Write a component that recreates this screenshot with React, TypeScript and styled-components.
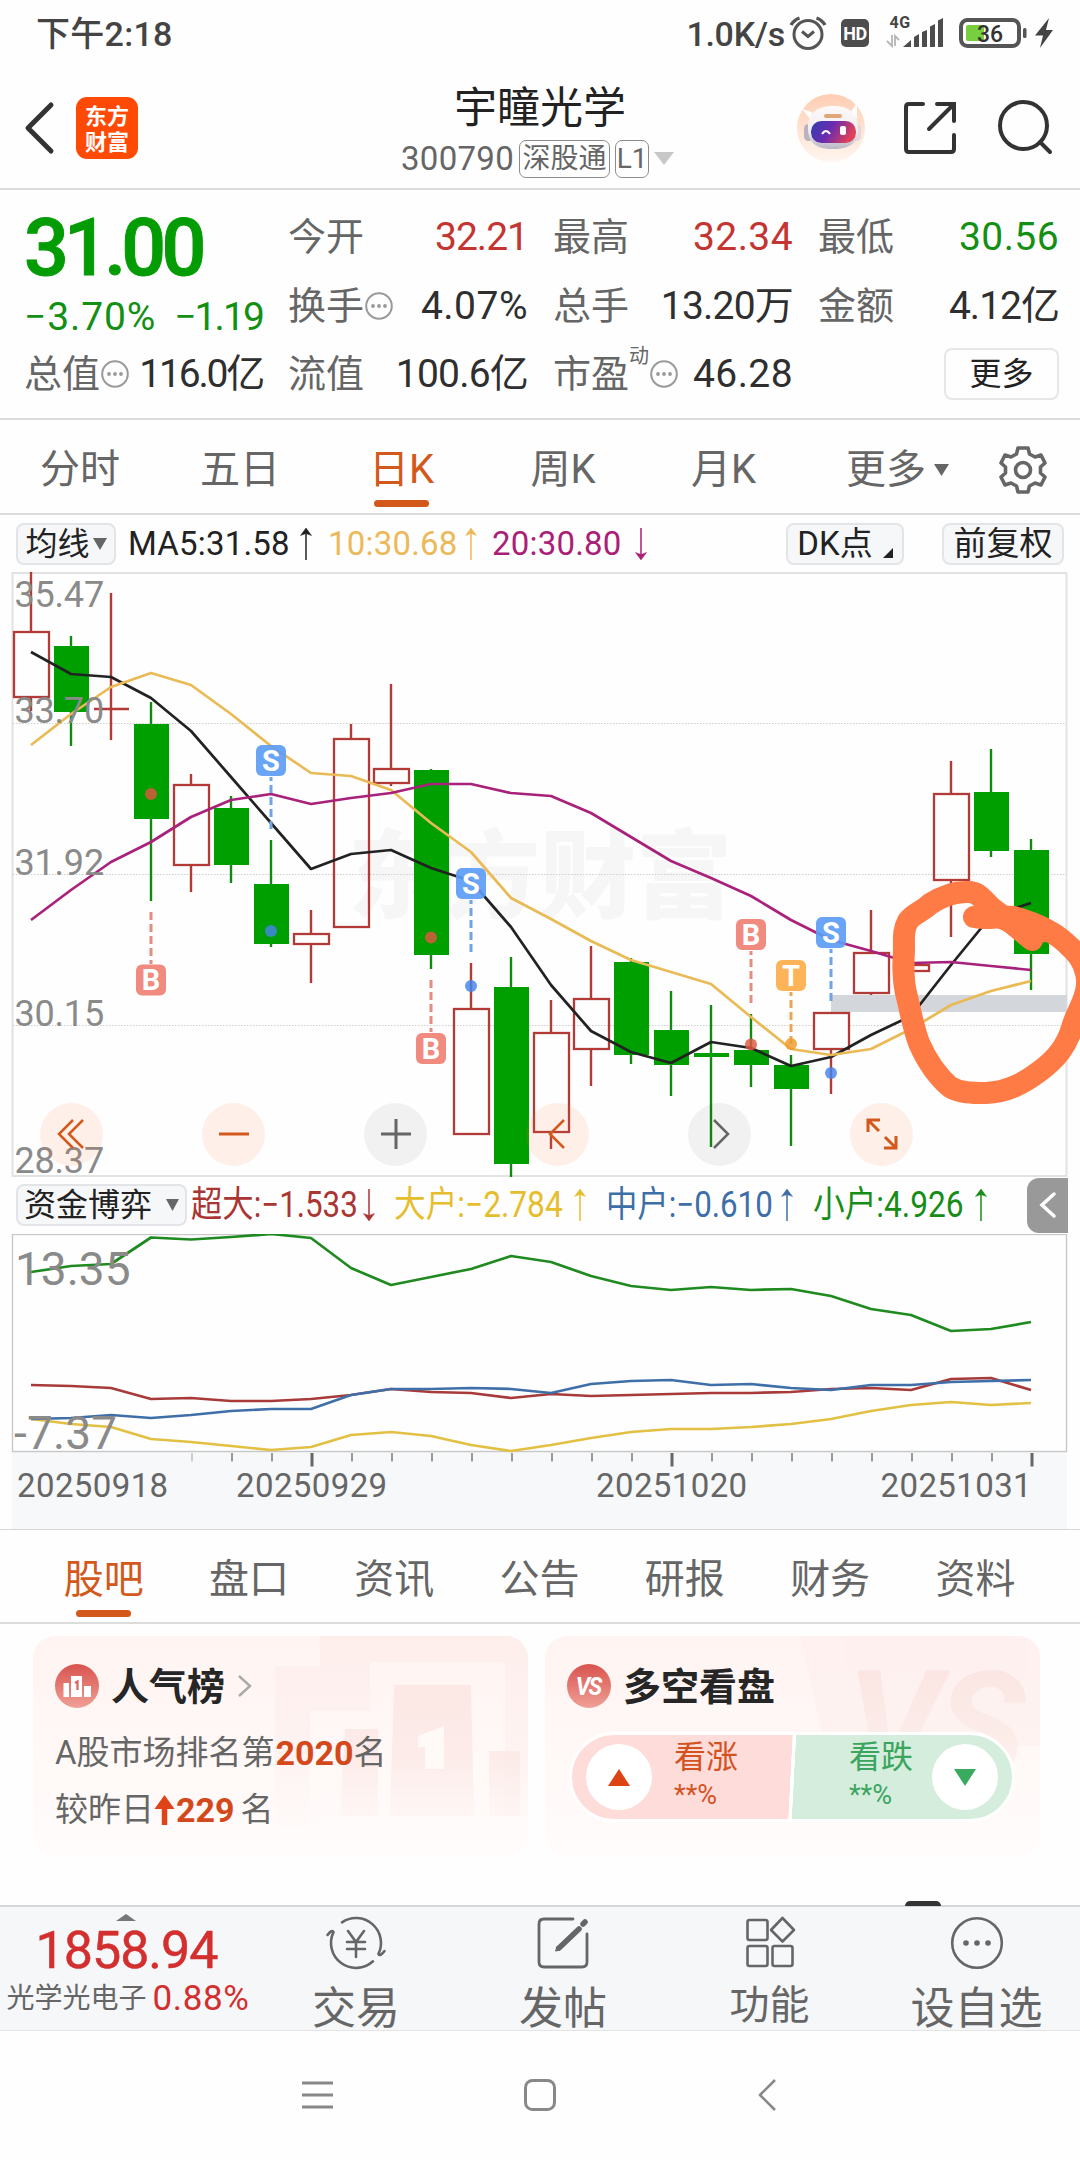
import React from "react";
import styled, { createGlobalStyle, css } from "styled-components";

const C = {
  red: "#c43431",
  green: "#139013",
  orange: "#d2591b",
  ink: "#2f2f2f",
  gray: "#666666",
  line: "#d6d6d6",
  panel: "#f6f7f9",
};

const Global = createGlobalStyle`
  * { box-sizing: border-box; }
  body {
    margin: 0;
    background: #fefefe;
    font-family: Roboto, "Noto Sans CJK SC", sans-serif;
    color: ${C.ink};
  }
  svg { display: block; flex: none; }
`;

const Screen = styled.main`
  width: 1080px;
  height: 2160px;
  overflow: hidden;
  display: flex;
  flex-direction: column;
  background: #fefefe;
  white-space: nowrap;
`;

/* ---------- status bar ---------- */

const StatusBar = styled.div`
  height: 68px;
  padding: 0 23px 0 36px;
  display: flex;
  align-items: center;
  justify-content: space-between;
  font-size: 34px;
  line-height: 48px;
  font-weight: 500;
  color: #444;
`;
const Clock = styled.span`
  letter-spacing: 0.3px;
`;
const StatusRight = styled.div`
  display: flex;
  align-items: center;
  letter-spacing: -0.3px;
`;

/* ---------- header ---------- */

const Header = styled.header`
  height: 122px;
  display: grid;
  grid-template-columns: 400px 280px 400px;
  border-bottom: 2px solid #dcdcdc;
`;
const HeaderLeft = styled.div`
  display: flex;
  align-items: center;
  padding-left: 23px;
  gap: 21px;
`;
const Logo = styled.div`
  width: 62px;
  height: 62px;
  border-radius: 11px;
  background: #ff4a06;
  color: #fff;
  font-family: "Noto Sans CJK SC", sans-serif;
  font-size: 22px;
  font-weight: 700;
  line-height: 26px;
  text-align: center;
  padding-top: 4px;
`;
const HeaderCenter = styled.div`
  display: flex;
  flex-direction: column;
  align-items: center;
`;
const Title = styled.h1`
  margin: 14px 0 0;
  font-size: 43px;
  line-height: 52px;
  font-weight: 400;
  color: #222;
`;
const SubTitle = styled.div`
  display: flex;
  align-items: center;
  gap: 5px;
  height: 40px;
  margin-top: 5px;
  padding-right: 5px;
  font-size: 33px;
  letter-spacing: 0.3px;
  color: ${C.gray};
`;
const Badge = styled.span<{ $w: number }>`
  width: ${(p) => p.$w}px;
  height: 38px;
  border: 1.5px solid #8c8c8c;
  border-radius: 7px;
  font-size: 28px;
  line-height: 36px;
  letter-spacing: 0;
  text-align: center;
`;
const HeaderRight = styled.div`
  display: flex;
  align-items: center;
  justify-content: flex-end;
  padding-right: 26px;
`;

/* ---------- quote panel ---------- */

const Quote = styled.section`
  height: 230px;
  padding: 13px 21px 0 24px;
  display: grid;
  grid-template-columns: 239px 240px 240px 241px;
  grid-template-rows: repeat(3, 68.5px);
  column-gap: 25px;
  border-bottom: 2px solid #dcdcdc;
`;
const PriceBlock = styled.div`
  grid-row: 1 / span 2;
  color: ${C.green};
  display: flex;
  flex-direction: column;
`;
const Price = styled.strong`
  margin-top: 2px;
  font-size: 79px;
  line-height: 86px;
  font-weight: 500;
  color: #049c04;
  letter-spacing: -4.8px;
  -webkit-text-stroke: 1px #049c04;
`;
const Change = styled.div`
  display: flex;
  justify-content: space-between;
  font-size: 39px;
  line-height: 48px;
  margin-top: 2px;
`;
const ChangePart = styled.span<{ $ls: number }>`
  letter-spacing: ${(p) => p.$ls}px;
`;
const Cell = styled.div`
  display: flex;
  align-items: center;
  font-size: 38px;
  line-height: 48px;
`;
const CellLabel = styled.span`
  color: ${C.gray};
  display: flex;
  align-items: center;
`;
const CellValue = styled.span<{ $tone?: string; $ls?: number }>`
  margin-left: auto;
  font-size: 39px;
  color: ${(p) => p.$tone ?? C.ink};
  letter-spacing: ${(p) => p.$ls ?? 0.4}px;
`;
const Sup = styled.sup`
  font-size: 20px;
  line-height: 20px;
  align-self: flex-start;
  margin-top: -4px;
`;
const MoreButton = styled.button`
  margin-left: auto;
  width: 115px;
  height: 52px;
  border: 2px solid #e6e6e9;
  border-radius: 8px;
  background: transparent;
  font: 400 32px/46px Roboto, "Noto Sans CJK SC", sans-serif;
  color: #222;
  padding: 0;
`;

/* ---------- tabs ---------- */

const Tabs = styled.nav<{ $cols: string; $pad: number; $topLine?: boolean }>`
  height: ${(p) => (p.$topLine ? 96 : 95)}px;
  display: grid;
  grid-template-columns: ${(p) => p.$cols};
  padding-left: ${(p) => p.$pad}px;
  border-top: ${(p) => (p.$topLine ? "1px solid #d6d6d6" : "0")};
  border-bottom: 2px solid #dcdcdc;
`;
const Tab = styled.a<{ $active?: boolean }>`
  display: flex;
  flex-direction: column;
  align-items: center;
  padding-top: 20px;
  font-size: 40px;
  line-height: 60px;
  color: ${(p) => (p.$active ? C.orange : C.gray)};
  ${(p) =>
    p.$active &&
    css`
      &::after {
        content: "";
        width: 55px;
        height: 7px;
        border-radius: 4px;
        background: ${C.orange};
      }
    `}
`;
const TabInline = styled.span`
  display: flex;
  align-items: center;
  gap: 8px;
`;
const TabIcon = styled.span`
  padding-top: 2px;
`;

/* ---------- chart toolbars ---------- */

const MaBar = styled.div`
  height: 57px;
  padding: 1px 0 0 16px;
  display: grid;
  grid-template-columns: 112px 200px 164px 294px 156px 122px;
  align-items: center;
`;
const FundBar = styled.div`
  height: 57px;
  padding-left: 16px;
  display: grid;
  grid-template-columns: 175px 203px 212px 207px 214px 41px;
  align-items: center;
`;
const Chip = styled.button<{ $w: number; $gap?: number; $size?: number }>`
  width: ${(p) => p.$w}px;
  height: 42px;
  display: flex;
  align-items: center;
  justify-content: center;
  gap: ${(p) => p.$gap ?? 0}px;
  padding: 0;
  border: 2px solid #e2e4e8;
  border-radius: 8px;
  background: ${C.panel};
  font: 400 ${(p) => p.$size ?? 32}px/36px Roboto, "Noto Sans CJK SC", sans-serif;
  color: #222;
`;
const Corner = styled.i`
  align-self: flex-end;
  margin: 0 0 5px 10px;
  border: 5px solid;
  border-color: transparent #222 #222 transparent;
`;
const Legend = styled.span<{ $tone: string }>`
  display: flex;
  align-items: center;
  font-size: 33px;
  line-height: 48px;
  color: ${(p) => p.$tone};
`;
const LegendText = styled.span<{ $w: number }>`
  width: ${(p) => p.$w}px;
  letter-spacing: 0.2px;
`;
const NarrowText = styled.span<{ $w: number; $k: number }>`
  width: ${(p) => p.$w}px;
  font-size: 36px;
  transform: scaleX(${(p) => p.$k});
  transform-origin: 0 50%;
`;
const Collapse = styled.button`
  width: 41px;
  height: 55px;
  padding: 0;
  border: 0;
  border-radius: 12px 0 0 12px;
  background: #999;
  display: flex;
  align-items: center;
  justify-content: center;
`;

/* ---------- charts ---------- */

const ChartBox = styled.section`
  position: relative;
  height: 605px;
`;
const Controls = styled.div`
  position: absolute;
  left: 40px;
  top: 531px;
  display: flex;
  gap: 99px;
`;
const RoundButton = styled.button<{ $warm?: boolean }>`
  width: 63px;
  height: 63px;
  padding: 0;
  border: 0;
  border-radius: 50%;
  background: ${(p) => (p.$warm ? "rgba(255,120,50,.1)" : "rgba(0,0,0,.05)")};
  color: ${(p) => (p.$warm ? C.orange : C.gray)};
  display: flex;
  align-items: center;
  justify-content: center;
`;

/* ---------- cards ---------- */

const Cards = styled.section`
  height: 281px;
  padding: 12px 0 0 33px;
  display: flex;
  gap: 17px;
`;
const Card = styled.article`
  position: relative;
  width: 495px;
  height: 220px;
  border-radius: 22px;
  overflow: hidden;
  background: linear-gradient(#fff4f2, #fffcfb);
`;
const CardArt = styled.svg`
  position: absolute;
  right: 0;
  top: 0;
`;
const CardBody = styled.div`
  position: relative;
  padding: 27px 0 0 22px;
`;
const CardHead = styled.div`
  height: 46px;
  display: flex;
  align-items: center;
  gap: 12px;
`;
const CardTitle = styled.h2`
  margin: 2px 0 0;
  font-size: 38px;
  line-height: 46px;
  font-weight: 700;
  color: #262626;
`;
const CardLine = styled.p<{ $top: number }>`
  margin: ${(p) => p.$top}px 0 0;
  display: flex;
  align-items: center;
  font-size: 33px;
  line-height: 40px;
  color: ${C.gray};
`;
const Strong = styled.b`
  margin-left: 1px;
  color: #d4491c;
  font-size: 34px;
  font-weight: 700;
`;
const Unit = styled.span`
  margin-left: 6px;
`;
const Vote = styled.div`
  width: 446px;
  height: 90px;
  margin: 23px 0 0 2px;
  border: 3px solid #fff;
  border-radius: 45px;
  overflow: hidden;
  display: flex;
  justify-content: space-between;
  align-items: center;
  background: linear-gradient(93deg, #fddcd9 49.6%, #fff 49.7%, #fff 50.4%, #d5eddc 50.5%);
`;
const VoteSide = styled.div<{ $tone: string; $gap: number }>`
  display: flex;
  align-items: center;
  gap: ${(p) => p.$gap}px;
  padding: 0 14px;
  color: ${(p) => p.$tone};
`;
const VoteDisc = styled.span`
  width: 66px;
  height: 66px;
  border-radius: 50%;
  background: #fff;
  display: flex;
  align-items: center;
  justify-content: center;
`;
const VoteText = styled.span`
  display: flex;
  flex-direction: column;
  font-size: 32px;
  line-height: 40px;
  height: 80px;
`;
const VotePct = styled.small`
  font-size: 27px;
  line-height: 36px;
`;

/* ---------- bottom ---------- */

const BottomBar = styled.footer`
  height: 126px;
  display: grid;
  grid-template-columns: 252px 208px 206px 207px 207px;
  background: ${C.panel};
  border-top: 2px solid ${C.line};
  border-bottom: 1px solid #e4e4e4;
  overflow: hidden;
`;
const IndexBox = styled.div`
  display: flex;
  flex-direction: column;
  align-items: center;
  padding-top: 7px;
  color: #d32f2f;
`;
const IndexValue = styled.strong`
  font-size: 52px;
  line-height: 58px;
  font-weight: 400;
  letter-spacing: -1px;
  padding: 1px 0 0 1px;
  -webkit-text-stroke: 0.5px #d32f2f;
`;
const IndexRow = styled.div`
  display: flex;
  align-items: center;
  gap: 6px;
  padding-left: 4px;
  margin-top: -4px;
  font-size: 35px;
  line-height: 46px;
  letter-spacing: 0.6px;
`;
const IndexName = styled.span`
  font-size: 28px;
  letter-spacing: 0;
  color: ${C.gray};
`;
const Action = styled.a<{ $size: number; $drop: number }>`
  display: flex;
  flex-direction: column;
  align-items: center;
  gap: ${(p) => p.$drop}px;
  padding-top: 6px;
  color: ${C.gray};
  font-size: ${(p) => p.$size}px;
  line-height: 62px;
  height: 140px;
`;
const NavBar = styled.div`
  height: 129px;
  display: flex;
  align-items: center;
  padding: 0 0 1px 302px;
`;
const NavSlot = styled.span<{ $w: number }>`
  width: ${(p) => p.$w}px;
`;
const PeekRow = styled.div`
  height: 0;
  position: relative;
`;
const PeekBadge = styled.i`
  position: absolute;
  left: 905px;
  top: -4px;
  width: 36px;
  height: 5px;
  border-radius: 5px 5px 0 0;
  background: #333;
`;

/* ---------- small drawings ---------- */

const Tri = ({ w, h, c, up }: { w: number; h: number; c: string; up?: boolean }) => (
  <svg width={w} height={h} viewBox="0 0 10 10" preserveAspectRatio="none">
    <path d={up ? "M5 0 10 10H0Z" : "M0 0H10L5 10Z"} fill={c} />
  </svg>
);

const Arrow = ({ down }: { down?: boolean }) => (
  <svg width="14" height="34" viewBox="0 0 14 34" fill="none" stroke="currentColor">
    <g transform={down ? "rotate(180 7 17)" : undefined}>
      <path d="M7 3V33" strokeWidth="1.500" />
      <path d="M7 1 12.500 8.500 7 6.500 1.500 8.500Z" fill="currentColor" strokeWidth="0.500" />
    </g>
  </svg>
);

const Info = () => (
  <svg width="30" height="30" viewBox="0 0 30 30">
    <circle cx="15" cy="15" r="12.800" fill="none" stroke="#999" strokeWidth="2" />
    <g fill="#999">
      <circle cx="9" cy="15" r="1.900" />
      <circle cx="15" cy="15" r="1.900" />
      <circle cx="21" cy="15" r="1.900" />
    </g>
  </svg>
);

const StatusIcons = () => (
  <svg width="272" height="40" viewBox="785 14 272 40">
    <g fill="none" stroke="#555" strokeWidth="3">
      <circle cx="808" cy="34.500" r="14" />
      <path d="M802 31.500 808 36.500 814 31.500" />
      <path d="M791 25Q794 20 799.500 18M825 25Q822 20 816.500 18" strokeWidth="3.400" />
    </g>
    <rect x="841" y="19" width="28" height="28" rx="5" fill="#4d4d4d" />
    <text x="855" y="40" fontSize="18" fontWeight="700" fill="#fff" textAnchor="middle" letterSpacing="-0.500">HD</text>
    <text x="889.500" y="28" fontSize="16" fontWeight="700" fill="#444" letterSpacing="0.500">4G</text>
    <g fill="none" stroke="#b5b5b5" strokeWidth="1.800">
      <path d="M892 35V46L887 41M895 46V36L899 40" />
    </g>
    <g fill="#4d4d4d">
      <path d="M903 47 911 40V47Z" />
      <path d="M914 47V37L919 34V47ZM922 47V32L927 30V47ZM930 47V26.500L935 24V47ZM938 47V20.500L943 18V47Z" />
    </g>
    <rect x="961" y="20" width="58" height="26" rx="6.500" fill="none" stroke="#555" strokeWidth="4" />
    <rect x="966" y="25" width="18" height="16" rx="2" fill="#77cf3f" />
    <rect x="1023" y="28" width="3.500" height="10" rx="1.500" fill="#555" />
    <text x="990" y="41.500" fontSize="23" fontWeight="500" fill="#333" textAnchor="middle" letterSpacing="0">36</text>
    <path d="M1049 18 1035 35.500H1043L1040 48 1053 30H1046Z" fill="#444" />
  </svg>
);

const BackIcon = () => (
  <svg width="32" height="54" viewBox="0 0 32 54" fill="none" stroke="#333" strokeWidth="5" strokeLinecap="round">
    <path d="M28 4 5 27 28 50" strokeLinejoin="round" />
  </svg>
);

const HeaderIcons = () => (
  <svg width="260" height="72" viewBox="794 92 260 72">
    <defs>
      <linearGradient id="bot" x1="0" y1="0" x2="0" y2="1">
        <stop offset="0" stopColor="#ffcdb2" />
        <stop offset="1" stopColor="#fff6f0" />
      </linearGradient>
      <linearGradient id="visor" x1="0" y1="0" x2="1" y2="0.300">
        <stop offset="0" stopColor="#2f3fae" />
        <stop offset="0.500" stopColor="#6a2bb0" />
        <stop offset="1" stopColor="#e0405a" />
      </linearGradient>
      <linearGradient id="shell" x1="0" y1="0" x2="0" y2="1">
        <stop offset="0" stopColor="#fdfafa" />
        <stop offset="0.600" stopColor="#f1ebee" />
        <stop offset="1" stopColor="#b9b6c4" />
      </linearGradient>
    </defs>
    <circle cx="831" cy="128" r="34" fill="url(#bot)" />
    <rect x="804" y="124" width="9" height="17" rx="4.500" fill="#b9b3c0" />
    <rect x="852" y="124" width="9" height="17" rx="4.500" fill="#e3d8dc" />
    <path d="M810 117 805 111 811 113ZM852 112 856 106 856 116Z" fill="#fff" stroke="#fff" strokeWidth="2" />
    <path d="M808 128C808 112 818 106 833 106C849 106 858 113 858 128C859 142 851 149 833 149C815 149 808 142 808 128Z" fill="url(#shell)" />
    <rect x="824" y="114" width="18" height="4" rx="2" fill="#e0a878" />
    <rect x="811" y="121" width="45" height="22" rx="10.500" fill="url(#visor)" />
    <path d="M822 134Q826 128 830 134" fill="none" stroke="#fff" strokeWidth="2.200" />
    <rect x="840" y="126" width="6" height="9" rx="2" fill="#fff" />
    <g fill="none" stroke="#333" strokeWidth="4" strokeLinecap="round">
      <path d="M923 104H909Q906 104 906 107V149Q906 152 909 152H951Q954 152 954 149V135" />
      <path d="M937 104H954V121M953 105 929 129" />
      <circle cx="1023.500" cy="125.500" r="23.500" />
      <path d="M1040 142 1050 152" />
    </g>
  </svg>
);

const Gear = () => (
  <svg width="50" height="56" viewBox="-25 -28 50 56" fill="none" stroke="#666" strokeWidth="3.600" strokeLinejoin="round">
    <path d="M-5-22H5L6.500-16 12-13 18-15 22-7 17.500-3V3L22 7 18 15 12 13 6.500 16 5 22H-5L-6.500 16-12 13-18 15-22 7-17.500 3V-3L-22-7-18-15-12-13-6.500-16Z" />
    <circle r="7.500" />
  </svg>
);

/* ---------- chart data ---------- */

const STEP = 40;
const X0 = 31;
const xAt = (i: number) => X0 + i * STEP;

type Candle = [up: 0 | 1, high: number, top: number, bottom: number, low: number];
const candles: Candle[] = [
  [1, 572, 632, 697, 711],
  [0, 636, 646, 712, 746],
  [1, 593, 709, 709, 740],
  [0, 702, 724, 819, 901],
  [1, 774, 785, 865, 892],
  [0, 796, 808, 865, 883],
  [0, 840, 884, 944, 947],
  [1, 910, 934, 944, 983],
  [1, 724, 739, 927, 927],
  [1, 684, 769, 783, 786],
  [0, 769, 770, 955, 969],
  [1, 963, 1009, 1134, 1134],
  [0, 957, 987, 1164, 1177],
  [1, 1000, 1033, 1132, 1149],
  [1, 946, 999, 1049, 1086],
  [0, 958, 962, 1055, 1064],
  [0, 991, 1030, 1065, 1096],
  [0, 1005, 1053, 1057, 1147],
  [0, 1014, 1050, 1065, 1087],
  [0, 1055, 1065, 1089, 1146],
  [1, 1013, 1013, 1049, 1094],
  [1, 910, 953, 993, 995],
  [1, 965, 965, 971, 971],
  [1, 761, 794, 880, 937],
  [0, 749, 792, 851, 857],
  [0, 839, 850, 954, 990],
];

const ma5 = [652, 674, 677, 698, 731, 777, 823, 869, 854, 850, 868, 881, 927, 985, 1031, 1052, 1063, 1042, 1048, 1066, 1057, 1035, 1016, 965, 916, 903];
const ma10 = [745, 714, 687, 673, 685, 714, 746, 773, 776, 790, 823, 852, 898, 919, 941, 960, 972, 984, 1017, 1049, 1055, 1049, 1029, 1005, 991, 981];
const ma20 = [920, 890, 862, 842, 817, 800, 794, 804, 798, 793, 784, 784, 793, 796, 813, 837, 861, 878, 896, 920, 940, 951, 963, 962, 966, 970];

const fundSmall = [1272, 1266, 1264, 1237.5, 1239.5, 1237, 1234, 1238, 1268, 1285, 1277, 1269, 1256, 1262, 1276, 1286, 1290, 1287, 1290, 1289, 1296, 1309, 1315, 1331, 1329, 1322];
const fundSuper = [1385, 1386, 1388, 1399, 1398, 1401, 1401, 1399, 1395, 1389, 1392, 1393, 1398, 1394, 1396, 1395, 1394, 1393, 1393, 1392, 1389, 1388, 1390, 1379, 1378, 1390];
const fundMid = [1419, 1418, 1415, 1418, 1415, 1411, 1409, 1409, 1395, 1389, 1389, 1388, 1389, 1393, 1384, 1381, 1380, 1385, 1384, 1388, 1390, 1385, 1385, 1382, 1381, 1380];
const fundBig = [1419, 1424, 1427, 1439, 1442, 1446, 1450, 1447, 1435, 1432, 1436, 1445, 1451, 1445, 1438, 1432, 1429, 1429, 1427, 1424, 1419, 1411, 1405, 1402, 1405, 1403];

const toPoints = (ys: number[]) => ys.map((y, i) => `${xAt(i)},${y}`).join(" ");

type Marker = { i: number; k: "B" | "S" | "T"; y: number; dot: number; from: number; to: number };
const markers: Marker[] = [
  { i: 3, k: "B", y: 980, dot: 794, from: 964, to: 912 },
  { i: 6, k: "S", y: 760.5, dot: 931, from: 777, to: 829 },
  { i: 10, k: "B", y: 1048.5, dot: 937.5, from: 1032, to: 980 },
  { i: 11, k: "S", y: 883.5, dot: 986, from: 900, to: 952 },
  { i: 18, k: "B", y: 934.5, dot: 1044.5, from: 951, to: 1003 },
  { i: 19, k: "T", y: 975.5, dot: 1044, from: 992, to: 1044 },
  { i: 20, k: "S", y: 932.5, dot: 1073, from: 949, to: 1001 },
];
const markerFill = { B: "#f08074", S: "#5c9cf5", T: "#fdac4a" };
const markerLine = { B: "#e58b80", S: "#6ea3e6", T: "#eba458" };
const dotFill = { B: "#df5540", S: "#4484ec", T: "#f09a2c" };

const KLine = () => (
  <svg width="1080" height="605" viewBox="0 572 1080 605">
    <text x="540" y="910" fontSize="96" fontWeight="900" fill="#f6f6f6" textAnchor="middle" fontFamily="'Noto Sans CJK SC', sans-serif">东方财富</text>
    <rect x="12.500" y="573" width="1054" height="603" fill="none" stroke="#e2e2e2" strokeWidth="2" />
    <g stroke="#cfcfcf" strokeDasharray="1.500 1.500">
      <path d="M13 723.500H1066M13 874.500H1066M13 1025.500H1066" />
    </g>
    <rect x="831" y="995" width="236" height="17" fill="#d3d6db" />
    {candles.map(([up, hi, t, b, lo], i) => {
      const x = xAt(i);
      const tone = up ? "#b23a37" : "#128a12";
      return (
        <g key={i}>
          <path d={up ? `M${x} ${hi}V${t}M${x} ${b}V${lo}` : `M${x} ${hi}V${lo}`} stroke={tone} strokeWidth="2.400" />
          {up ? (
            t === b ? (
              <path d={`M${x - 17} ${t}H${x + 18}`} stroke={tone} strokeWidth="2.400" />
            ) : (
              <rect x={x - 17} y={t} width="35" height={b - t} fill={i === 20 ? "#fefefe" : "none"} stroke={tone} strokeWidth="2.300" />
            )
          ) : (
            <rect x={x - 17} y={t} width="35" height={b - t} fill="#009f00" />
          )}
        </g>
      );
    })}
    <g fill="none" strokeWidth="2.700" strokeLinejoin="round">
      <polyline points={toPoints(ma5)} stroke="#222" />
      <polyline points={toPoints(ma10)} stroke="#e9ba55" />
      <polyline points={toPoints(ma20)} stroke="#a8217a" />
    </g>
    {markers.map((m) => (
      <g key={m.i}>
        <path d={`M${xAt(m.i)} ${m.from}V${m.to}`} stroke={markerLine[m.k]} strokeWidth="3" strokeDasharray="4 4 8 4 8 4 8 4 8 4" />
        <circle cx={xAt(m.i)} cy={m.dot} r="6" fill={dotFill[m.k]} opacity="0.820" />
        <rect x={xAt(m.i) - 15} y={m.y - 15.5} width="30" height="31" rx="6" fill={markerFill[m.k]} opacity="0.920" />
        <text x={xAt(m.i)} y={m.y + 10} fontSize="29" fontWeight="700" fill="#fff" textAnchor="middle">{m.k}</text>
      </g>
    ))}
    <g fontSize="36" fill="#8a8a8a" fontFamily="Roboto, sans-serif" letterSpacing="-0.200">
      <text x="14.500" y="607">35.47</text>
      <text x="14.500" y="723">33.70</text>
      <text x="14.500" y="875">31.92</text>
      <text x="14.500" y="1026">30.15</text>
      <text x="14.500" y="1173">28.37</text>
    </g>
    <path
      d="M974 917C985 920 1000 916 1014 917C1036 923 1056 932 1070 947C1082 957 1088 972 1087 985C1086 1001 1076 1012 1072 1028C1066 1047 1056 1059 1040 1071C1024 1083 1008 1092 986 1093C972 1093 960 1093 950 1087C936 1075 926 1059 919 1043C914 1030 911 1014 907 997C903 983 903 965 904 950C904 938 903 930 908 921C914 913 922 912 930 904C942 896 955 891 970 892C980 893 984 901 992 908C1004 917 1018 928 1032 940"
      fill="none"
      stroke="#ff7b45"
      strokeWidth="22"
      strokeLinecap="round"
      strokeLinejoin="round"
    />
    <path d="M985 918 1020 925 1045 938 1032 940Z" fill="#ff7b45" stroke="#ff7b45" strokeWidth="8" />
  </svg>
);

const FundChart = () => (
  <svg width="1080" height="295" viewBox="0 1234 1080 295">
    <rect x="12" y="1452" width="1055" height="77" fill="#f7f8fa" />
    <rect x="12.500" y="1234.500" width="1054" height="217" fill="none" stroke="#c8c8c8" strokeWidth="1.400" />
    <g fill="none" strokeWidth="2.700" strokeLinejoin="round">
      <polyline points={toPoints(fundSmall)} stroke="#1f8a1f" />
      <polyline points={toPoints(fundSuper)} stroke="#a83a3a" />
      <polyline points={toPoints(fundBig)} stroke="#e2c043" />
      <polyline points={toPoints(fundMid)} stroke="#3f6fa8" />
    </g>
    <g fontSize="46" fill="#8a8a8a" fontFamily="Roboto, sans-serif">
      <text x="15" y="1285">13.35</text>
      <text x="14" y="1449" letterSpacing="0.200">-7.37</text>
    </g>
    {Array.from({ length: 22 }, (_, k) => {
      const i = k + 4;
      const major = i === 7 || i === 16 || i === 25;
      return (
        <path
          key={i}
          d={`M${xAt(i) + 1} 1453V${major ? 1466.5 : 1461.5}`}
          stroke={major ? "#666" : i === 4 ? "#ccc" : "#999"}
          strokeWidth={major ? 3 : 2}
        />
      );
    })}
    <g fontSize="33" fill="#666" fontFamily="Roboto, sans-serif" letterSpacing="0.400">
      <text x="17" y="1497">20250918</text>
      <text x="236" y="1497">20250929</text>
      <text x="596" y="1497">20251020</text>
      <text x="880.500" y="1497">20251031</text>
    </g>
  </svg>
);

const Podium = () => (
  <svg width="44" height="44" viewBox="0 0 44 44">
    <defs>
      <linearGradient id="badge" x1="0" y1="0" x2="0" y2="1">
        <stop offset="0" stopColor="#d8534f" />
        <stop offset="1" stopColor="#f0a096" />
      </linearGradient>
    </defs>
    <circle cx="22" cy="22" r="22" fill="url(#badge)" />
    <path d="M8.500 19H14V33H8.500ZM16 12H27V33H16ZM29 22H36V33H29Z" fill="#fff" />
    <path d="M20 19 22.500 17.500V26" fill="none" stroke="#d8655f" strokeWidth="2.200" />
  </svg>
);

const VsBadge = () => (
  <svg width="44" height="44" viewBox="0 0 44 44">
    <circle cx="22" cy="22" r="22" fill="url(#badge)" />
    <text x="21" y="31" fontSize="26" fontWeight="700" fontStyle="italic" fill="#fff" textAnchor="middle" letterSpacing="-2" transform="translate(2.500 0) scale(.88 1)">VS</text>
  </svg>
);

const stats: { label: string; info?: boolean; sup?: string; value: string; tone?: string; ls?: number }[] = [
  { label: "今开", value: "32.21", tone: C.red, ls: -1 },
  { label: "最高", value: "32.34", tone: C.red },
  { label: "最低", value: "30.56", tone: C.green },
  { label: "换手", info: true, value: "4.07%", ls: 0.5 },
  { label: "总手", value: "13.20万", ls: -0.8 },
  { label: "金额", value: "4.12亿", ls: -1 },
  { label: "总值", info: true, value: "116.0亿", ls: -2.2 },
  { label: "流值", value: "100.6亿", ls: -0.8 },
  { label: "市盈", info: true, sup: "动", value: "46.28" },
];

const periods = ["分时", "五日", "日K", "周K", "月K"];
const sections = ["股吧", "盘口", "资讯", "公告", "研报", "财务", "资料"];

export default function App() {
  return (
    <Screen>
      <Global />
      <StatusBar>
        <Clock>下午2:18</Clock>
        <StatusRight>
          1.0K/s
          <StatusIcons />
        </StatusRight>
      </StatusBar>

      <Header>
        <HeaderLeft>
          <BackIcon />
          <Logo>
            东方
            <br />
            财富
          </Logo>
        </HeaderLeft>
        <HeaderCenter>
          <Title>宇瞳光学</Title>
          <SubTitle>
            300790
            <Badge $w={91}>深股通</Badge>
            <Badge $w={34}>L1</Badge>
            <Tri w={20} h={13} c="#c8c8c8" />
          </SubTitle>
        </HeaderCenter>
        <HeaderRight>
          <HeaderIcons />
        </HeaderRight>
      </Header>

      <Quote>
        <PriceBlock>
          <Price>31.00</Price>
          <Change>
            <ChangePart $ls={0.9}>−3.70%</ChangePart>
            <ChangePart $ls={-1.9}>−1.19</ChangePart>
          </Change>
        </PriceBlock>
        {stats.map((s) => (
          <Cell key={s.label}>
            <CellLabel>
              {s.label}
              {s.sup && <Sup>{s.sup}</Sup>}
              {s.info && <Info />}
            </CellLabel>
            <CellValue $tone={s.tone} $ls={s.ls}>
              {s.value}
            </CellValue>
          </Cell>
        ))}
        <Cell>
          <MoreButton>更多</MoreButton>
        </Cell>
      </Quote>

      <Tabs $cols="160px 160px 163px 160px 161px 187px 63px" $pad={0}>
        {periods.map((p) => (
          <Tab key={p} $active={p === "日K"}>
            {p}
          </Tab>
        ))}
        <Tab>
          <TabInline>
            更多
            <Tri w={15} h={12} c="#666" />
          </TabInline>
        </Tab>
        <Tab>
          <TabIcon>
            <Gear />
          </TabIcon>
        </Tab>
      </Tabs>

      <MaBar>
        <Chip $w={100} $gap={3}>
          均线
          <Tri w={14} h={12} c="#666" />
        </Chip>
        <Legend $tone="#222">
          <LegendText $w={171}>MA5:31.58</LegendText>
          <Arrow />
        </Legend>
        <Legend $tone="#ecb95a">
          <LegendText $w={136}>10:30.68</LegendText>
          <Arrow />
        </Legend>
        <Legend $tone="#aa1e78">
          <LegendText $w={142}>20:30.80</LegendText>
          <Arrow down />
        </Legend>
        <Chip $w={118} $size={33}>
          DK点
          <Corner />
        </Chip>
        <Chip $w={122} $size={33}>
          前复权
        </Chip>
      </MaBar>

      <ChartBox>
        <KLine />
        <Controls>
          <RoundButton $warm>
            <svg width="30" height="32" viewBox="0 0 30 32" fill="none" stroke="currentColor" strokeWidth="2.500">
              <path d="M16 2 2 16 16 30M26 2 12 16 26 30" />
            </svg>
          </RoundButton>
          <RoundButton $warm>
            <svg width="32" height="32" viewBox="0 0 32 32" stroke="currentColor" strokeWidth="3">
              <path d="M1 16H31" />
            </svg>
          </RoundButton>
          <RoundButton>
            <svg width="32" height="32" viewBox="0 0 32 32" stroke="currentColor" strokeWidth="3">
              <path d="M1 16H31M16 1V31" />
            </svg>
          </RoundButton>
          <RoundButton $warm>
            <svg width="22" height="32" viewBox="0 0 22 32" fill="none" stroke="currentColor" strokeWidth="2.500">
              <path d="M17 2 3 16 17 30" />
            </svg>
          </RoundButton>
          <RoundButton>
            <svg width="22" height="32" viewBox="0 0 22 32" fill="none" stroke="currentColor" strokeWidth="2.500">
              <path d="M5 2 19 16 5 30" />
            </svg>
          </RoundButton>
          <RoundButton $warm>
            <svg width="34" height="34" viewBox="0 0 34 34" fill="none" stroke="currentColor" strokeWidth="3">
              <path d="M15 3H3V15M3 3 14 14M31 19V31H19M31 31 20 20" />
            </svg>
          </RoundButton>
        </Controls>
      </ChartBox>

      <FundBar>
        <Chip $w={171} $gap={14}>
          资金博弈
          <Tri w={13} h={12} c="#666" />
        </Chip>
        <Legend $tone="#aa3533">
          <NarrowText $w={171} $k={0.87}>超大:−1.533</NarrowText>
          <Arrow down />
        </Legend>
        <Legend $tone="#e6bd2c">
          <NarrowText $w={179} $k={0.88}>大户:−2.784</NarrowText>
          <Arrow />
        </Legend>
        <Legend $tone="#3d6ea8">
          <NarrowText $w={174} $k={0.87}>中户:−0.610</NarrowText>
          <Arrow />
        </Legend>
        <Legend $tone="#178c17">
          <NarrowText $w={161} $k={0.88}>小户:4.926</NarrowText>
          <Arrow />
        </Legend>
        <Collapse>
          <svg width="18" height="28" viewBox="0 0 18 28" fill="none" stroke="#fff" strokeWidth="3.500" strokeLinecap="round">
            <path d="M15 3 3 14 15 25" />
          </svg>
        </Collapse>
      </FundBar>

      <FundChart />

      <Tabs as="div" $topLine $cols="repeat(7, 145.3px)" $pad={31}>
        {sections.map((s, i) => (
          <Tab key={s} $active={i === 0}>
            {s}
          </Tab>
        ))}
      </Tabs>

      <Cards>
        <Card>
          <CardArt width="260" height="220" viewBox="268 0 260 220">
            <defs>
              <linearGradient id="fade" x1="0" y1="0" x2="0" y2="220" gradientUnits="userSpaceOnUse">
                <stop offset="0" stopColor="#fbe4e1" stopOpacity="0.900" />
                <stop offset="0.550" stopColor="#fbe6e3" stopOpacity="0.700" />
                <stop offset="0.850" stopColor="#fdf0ee" stopOpacity="0.300" />
              </linearGradient>
            </defs>
            <path d="M320 0H528V180H505V26H370V75H310V190H275V30H320Z" fill="url(#fade)" opacity="0.400" />
            <path d="M394 49H471L474 180H390ZM345 93H378V180H340ZM489 115H520V180H489Z" fill="url(#fade)" />
            <path d="M418 100 444 90V133H425V110L418 112Z" fill="#fffaf8" />
          </CardArt>
          <CardBody>
            <CardHead>
              <Podium />
              <CardTitle>人气榜</CardTitle>
              <svg width="16" height="24" viewBox="0 0 16 24" fill="none" stroke="#aaa" strokeWidth="2.500">
                <path d="M2 2 13 12 2 22" />
              </svg>
            </CardHead>
            <CardLine $top={24}>
              A股市场排名第<Strong>2020</Strong>名
            </CardLine>
            <CardLine $top={17}>
              较昨日
              <svg width="21" height="32" viewBox="0 0 23 32" preserveAspectRatio="none" fill="#df4318">
                <path d="M11.500 1 22.500 15H14.500V31H8.500V15H.5Z" />
              </svg>
              <Strong>229</Strong>
              <Unit>名</Unit>
            </CardLine>
          </CardBody>
        </Card>
        <Card>
          <CardArt width="240" height="220" viewBox="0 0 240 220">
            <defs>
              <linearGradient id="vsFade" x1="0" y1="0" x2="0" y2="1">
                <stop offset="0" stopColor="#fadfdc" />
                <stop offset="1" stopColor="#fdf3f1" />
              </linearGradient>
            </defs>
            <path d="M0 0H240V110H25Z" fill="#fdeeec" opacity="0.500" />
            <text x="134" y="140" fontSize="148" fontWeight="700" fontStyle="italic" fill="url(#vsFade)" opacity="0.800" textAnchor="middle" letterSpacing="-4">VS</text>
          </CardArt>
          <CardBody>
            <CardHead>
              <VsBadge />
              <CardTitle>多空看盘</CardTitle>
            </CardHead>
            <Vote>
              <VoteSide $tone="#d4521f" $gap={22}>
                <VoteDisc>
                  <Tri w={22} h={17} c="#dd4314" up />
                </VoteDisc>
                <VoteText>
                  看涨
                  <VotePct>**%</VotePct>
                </VoteText>
              </VoteSide>
              <VoteSide $tone="#3ba55f" $gap={19}>
                <VoteText>
                  看跌
                  <VotePct>**%</VotePct>
                </VoteText>
                <VoteDisc>
                  <Tri w={22} h={17} c="#3aab5e" />
                </VoteDisc>
              </VoteSide>
            </Vote>
          </CardBody>
        </Card>
      </Cards>

      <PeekRow>
        <PeekBadge />
      </PeekRow>
      <BottomBar>
        <IndexBox>
          <Tri w={20} h={7} c="#777" up />
          <IndexValue>1858.94</IndexValue>
          <IndexRow>
            <IndexName>光学光电子</IndexName>
            0.88%
          </IndexRow>
        </IndexBox>
        <Action $size={44} $drop={5}>
          <svg width="62" height="60" viewBox="-31 -30 62 60" fill="none" stroke="#666" strokeWidth="2.600" strokeLinecap="round">
            <path d="M-14-20.700A25 25 0 0 1 22.500 10.900Q24 14 28.500 8" />
            <path d="M17 18.300A25 25 0 0 1-22.500-10.900Q-24-14-28.500-8" />
            <path d="M-8-12 0-1 8-12M0-1V14M-9-1H9M-9 6H9" />
          </svg>
          交易
        </Action>
        <Action $size={44} $drop={5}>
          <svg width="62" height="60" viewBox="-31 -30 62 60" fill="none" stroke="#666" strokeWidth="2.800" strokeLinecap="round">
            <path d="M10-24H-19Q-24-24-24-19V19Q-24 24-19 24H19Q24 24 24 19V-9" />
            <path d="M22-21 20-19M16-14-4 5" strokeWidth="5.500" />
            <path d="M-7 8-3 7-6 4Z" fill="#666" strokeWidth="1" />
          </svg>
          发帖
        </Action>
        <Action $size={40} $drop={2}>
          <svg width="62" height="60" viewBox="-31 -30 62 60" fill="none" stroke="#666" strokeWidth="2.600" strokeLinejoin="round">
            <rect x="-22.500" y="-23" width="20" height="20" rx="2" />
            <rect x="-22.500" y="3" width="20" height="20" rx="2" />
            <rect x="2.500" y="3" width="20" height="20" rx="2" />
            <path d="M12.500-25 24-13 12.500-1.500 1-13Z" />
          </svg>
          功能
        </Action>
        <Action $size={44} $drop={5}>
          <svg width="62" height="60" viewBox="-31 -30 62 60">
            <circle r="24.800" fill="none" stroke="#666" strokeWidth="2.600" />
            <g fill="#666">
              <circle cx="-11" r="2.800" />
              <circle r="2.800" />
              <circle cx="11" r="2.800" />
            </g>
          </svg>
          设自选
        </Action>
      </BottomBar>
      <NavBar>
        <NavSlot $w={222}>
          <svg width="31" height="32" viewBox="0 0 31 32" stroke="#888" strokeWidth="3">
            <path d="M0 4H31M0 16H31M0 28H31" />
          </svg>
        </NavSlot>
        <NavSlot $w={233}>
          <svg width="32" height="32" viewBox="0 0 32 32" fill="none" stroke="#888" strokeWidth="3">
            <rect x="1.500" y="1.500" width="29" height="29" rx="7" />
          </svg>
        </NavSlot>
        <svg width="20" height="34" viewBox="0 0 20 34" fill="none" stroke="#888" strokeWidth="2.600">
          <path d="M18 2 3 17 18 32" strokeLinejoin="round" />
        </svg>
      </NavBar>
    </Screen>
  );
}
